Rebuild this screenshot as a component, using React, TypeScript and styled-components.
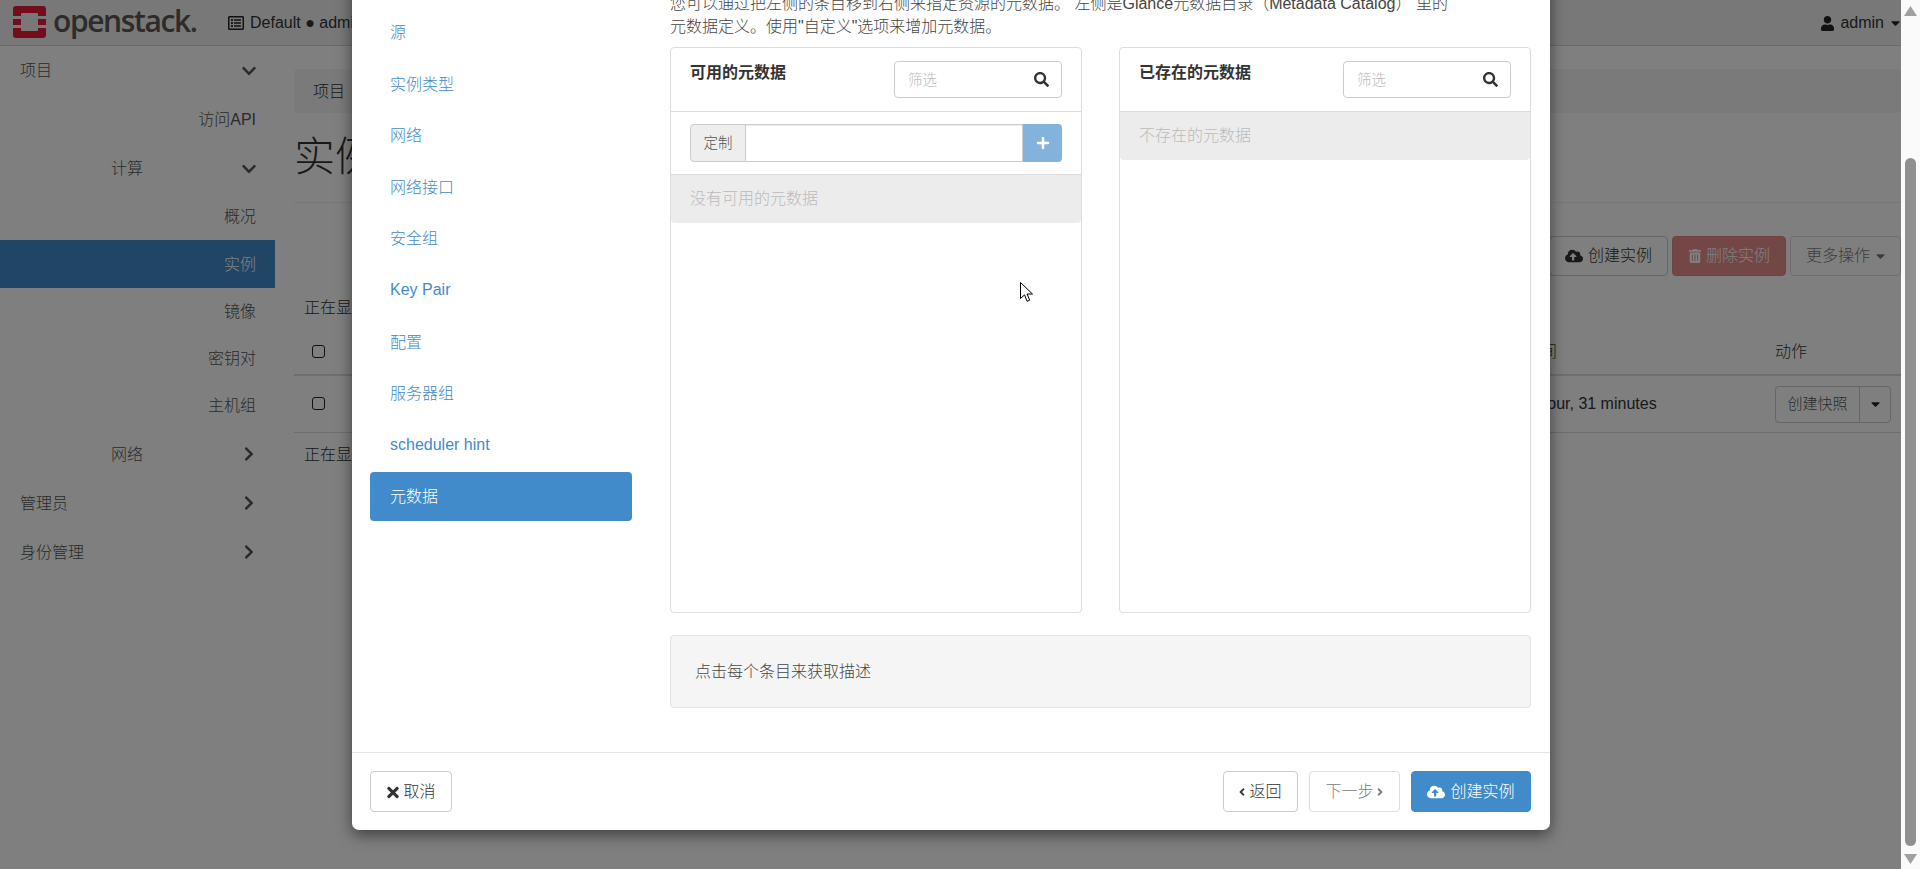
import React from "react";
import styled, { createGlobalStyle } from "styled-components";
import {
  FaCaretDown,
  FaChevronDown,
  FaChevronRight,
  FaCloudUploadAlt,
  FaAngleLeft,
  FaAngleRight,
  FaPlus,
  FaRegListAlt,
  FaSearch,
  FaTimes,
  FaTrashAlt,
  FaUser,
} from "react-icons/fa";

const Global = createGlobalStyle`
  html, body { margin: 0; padding: 0; height: 100%; overflow: hidden; background: #fff; }
  body { font-family: "Liberation Sans", "Noto Sans CJK SC", sans-serif; font-size: 16px; font-weight: 300; line-height: 1.43; color: #333; }
  * { box-sizing: border-box; }
`;

const Shell = styled.div`
  position: relative;
  display: flex;
  width: 100%;
  height: 100vh;
  overflow: hidden;
`;
const Page = styled.div`
  flex: 1;
  min-width: 0;
  position: relative;
  display: flex;
  flex-direction: column;
`;
const TopBar = styled.header`
  flex: none;
  height: 46px;
  display: flex;
  align-items: center;
  background: #f0f0f0;
  border-bottom: 1px solid #d2d2d2;
  padding: 1px 1px 0 13px;
  color: #333;
`;
const LogoMark = styled.svg`
  flex: none;
  width: 33px;
  height: 32px;
  margin-top: -2px;
`;
const LogoText = styled.span`
  flex: none;
  width: 175px;
  margin-left: 7px;
  margin-top: -4px;
  font-family: "Open Sans", "Liberation Sans", sans-serif;
  font-size: 30px;
  font-weight: 600;
  line-height: 40px;
  letter-spacing: -1.4px;
  color: #5c5654;
`;
const EnvLabel = styled.span`
  display: flex;
  align-items: center;
  gap: 6px;
  white-space: nowrap;
  svg { font-size: 16px; color: #222; }
`;
const UserMenu = styled.span`
  margin-left: auto;
  display: flex;
  align-items: center;
  gap: 5px;
  svg { color: #222; }
`;
const NarrowCaret = styled(FaCaretDown)`
  flex: none;
  width: 9px;
  height: 14px;
`;
const MenuCaret = styled(NarrowCaret)`
  margin-left: 2px;
`;
const Columns = styled.div`
  flex: 1;
  display: flex;
  min-height: 0;
`;
const Sidebar = styled.nav`
  flex: none;
  width: 275px;
`;
const SideRow = styled.div<{ $h: number; $indent?: number; $active?: boolean; $leaf?: boolean }>`
  height: ${(p) => p.$h}px;
  display: flex;
  align-items: center;
  justify-content: ${(p) => (p.$leaf ? "flex-end" : "flex-start")};
  padding: 2px ${(p) => (p.$leaf ? 19 : 18)}px 0 ${(p) => p.$indent ?? 20}px;
  background: ${(p) => (p.$active ? "#428bca" : "transparent")};
  color: ${(p) => (p.$active ? "#fff" : "#555")};
  svg { margin: -2px 0 0 auto; font-size: 16px; color: #555; }
`;
const Main = styled.main`
  flex: 1;
  min-width: 0;
  padding: 23px 0 0 19px;
`;
const Crumb = styled.div`
  height: 44px;
  display: flex;
  align-items: center;
  padding: 2px 0 0 19px;
  background: #f5f5f5;
  border-radius: 4px;
`;
const Title = styled.h1`
  margin: 0;
  height: 90px;
  display: flex;
  align-items: center;
  font-size: 41px;
  font-weight: 300;
  border-bottom: 1px solid #eee;
`;
const Toolbar = styled.div`
  margin-top: 33px;
  display: flex;
  justify-content: flex-end;
  gap: 4px;
`;
const PageButton = styled.div<{ $kind?: "danger" | "muted" }>`
  height: 40px;
  padding: 1px 15px 0;
  display: flex;
  align-items: center;
  gap: ${(p) => (p.$kind === "danger" ? 4 : p.$kind === "muted" ? 6 : 5)}px;
  border-radius: 4px;
  border: 1px solid ${(p) => (p.$kind === "danger" ? "#d43f3a" : "#ccc")};
  background: ${(p) => (p.$kind === "danger" ? "#d9534f" : "#fff")};
  color: ${(p) => (p.$kind === "danger" ? "#fff" : "#333")};
  opacity: ${(p) => (p.$kind ? 0.65 : 1)};
  svg { flex: none; margin-top: -1px; }
`;
const Count = styled.div<{ $gap: number }>`
  margin-top: ${(p) => p.$gap}px;
  padding-left: 10px;
  height: 23px;
`;
const HeadRow = styled.div`
  height: 56px;
  padding-top: 10px;
  display: flex;
  align-items: center;
  border-bottom: 2px solid #ddd;
`;
const BodyRow = styled.div`
  height: 57px;
  display: flex;
  align-items: center;
  border-bottom: 1px solid #ddd;
`;
const CheckBox = styled.span`
  flex: none;
  width: 13px;
  height: 13px;
  margin: -2px 0 0 18px;
  border: 1.5px solid #222;
  border-radius: 3px;
`;
const TimeCell = styled.span`
  margin-left: auto;
  width: 250px;
  white-space: nowrap;
`;
const ActionCell = styled.span`
  width: 126px;
  flex: none;
`;
const SplitGroup = styled.div`
  width: 116px;
  height: 37px;
  display: flex;
  border: 1px solid #ccc;
  border-radius: 4px;
  font-size: 15px;
  color: #555;
`;
const SplitMain = styled.span`
  flex: 1;
  display: flex;
  align-items: center;
  justify-content: center;
  border-right: 1px solid #ccc;
`;
const SplitCaret = styled.span`
  width: 30px;
  display: flex;
  align-items: center;
  justify-content: center;
  color: #222;
`;
const Backdrop = styled.div`
  position: absolute;
  inset: 0;
  background: rgba(0, 0, 0, 0.5);
`;
const Modal = styled.section`
  position: absolute;
  left: 352px;
  top: -40px;
  width: 1198px;
  height: 870px;
  display: flex;
  flex-direction: column;
  background: #fff;
  border-radius: 7px;
  box-shadow: 0 5px 15px rgba(0, 0, 0, 0.5);
`;
const ModalBody = styled.div`
  flex: 1;
  min-height: 0;
  display: flex;
  padding: 0 19px 0 18px;
  gap: 38px;
`;
const StepNav = styled.nav`
  flex: none;
  width: 262px;
  padding-top: 48px;
  display: flex;
  flex-direction: column;
  gap: 2.6px;
`;
const StepItem = styled.div<{ $active?: boolean; $latin?: boolean }>`
  height: 49px;
  padding: ${(p) => (p.$latin ? 0 : 2)}px 20px 0;
  display: flex;
  align-items: center;
  border-radius: 4px;
  color: ${(p) => (p.$active ? "#fff" : "#428bca")};
  background: ${(p) => (p.$active ? "#428bca" : "transparent")};
`;
const StepContent = styled.div`
  flex: 1;
  min-width: 0;
  padding-top: 32px;
`;
const Intro = styled.p`
  margin: 0 0 9px;
  line-height: 23px;
  white-space: pre;
  color: #444;
`;
const PanelGrid = styled.div`
  display: grid;
  grid-template-columns: 412px 412px;
  justify-content: space-between;
`;
const Panel = styled.div`
  height: 566px;
  border: 1px solid #ddd;
  border-radius: 4px;
  display: flex;
  flex-direction: column;
`;
const PanelHead = styled.div`
  flex: none;
  height: 64px;
  padding: 0 19px;
  display: flex;
  justify-content: space-between;
  align-items: flex-start;
  border-bottom: 1px solid #ddd;
`;
const PanelTitle = styled.strong`
  margin-top: 14px;
  font-weight: 700;
  color: #333;
`;
const Filter = styled.label`
  margin-top: 13px;
  width: 168px;
  height: 37px;
  padding: 0 12px 0 13px;
  display: flex;
  align-items: center;
  border: 1px solid #ccc;
  border-radius: 4px;
  svg { flex: none; font-size: 15px; color: #333; }
`;
const FilterInput = styled.input`
  flex: 1;
  min-width: 0;
  border: 0;
  padding: 0;
  outline: 0;
  font: 300 14.5px "Liberation Sans", "Noto Sans CJK SC", sans-serif;
  &::placeholder { color: #bbb; opacity: 1; }
`;
const CustomRow = styled.div`
  flex: none;
  height: 63px;
  padding: 12px 19px;
  display: flex;
  border-bottom: 1px solid #ddd;
`;
const AddonLabel = styled.span`
  flex: none;
  width: 56px;
  height: 38px;
  display: flex;
  align-items: center;
  justify-content: center;
  font-size: 14.5px;
  color: #555;
  background: #eee;
  border: 1px solid #ccc;
  border-radius: 4px 0 0 4px;
`;
const AddonInput = styled.input`
  flex: 1;
  min-width: 0;
  height: 38px;
  border: 1px solid #ccc;
  border-left: 0;
  outline: 0;
  box-shadow: inset 0 1px 1px rgba(0, 0, 0, 0.08);
`;
const AddButton = styled.span`
  flex: none;
  width: 39px;
  height: 38px;
  display: flex;
  align-items: center;
  justify-content: center;
  background: #428bca;
  opacity: 0.65;
  color: #fff;
  font-size: 14px;
  border-radius: 0 4px 4px 0;
`;
const EmptyRow = styled.div`
  flex: none;
  height: 48px;
  padding: 1px 0 0 19px;
  display: flex;
  align-items: center;
  color: #bbb;
  background: #ececec;
  border-radius: 0 0 4px 4px;
`;
const Well = styled.div`
  margin-top: 22px;
  height: 73px;
  padding: 2px 0 0 24px;
  display: flex;
  align-items: center;
  background: #f5f5f5;
  border: 1px solid #e3e3e3;
  border-radius: 4px;
  color: #444;
`;
const ModalFooter = styled.footer`
  flex: none;
  height: 78px;
  padding: 18px 19px 18px 18px;
  display: flex;
  justify-content: space-between;
  border-top: 1px solid #e5e5e5;
`;
const FooterGroup = styled.div`
  display: flex;
  gap: 11px;
`;
const FooterButton = styled.div<{ $kind?: "primary" | "disabled" }>`
  height: 41px;
  padding: 1px 15.5px 0;
  display: flex;
  align-items: center;
  gap: ${(p) => (p.$kind === "primary" ? 5 : 4)}px;
  border-radius: 4px;
  border: 1px solid ${(p) => (p.$kind === "primary" ? "#428bca" : "#ccc")};
  background: ${(p) => (p.$kind === "primary" ? "#428bca" : "#fff")};
  color: ${(p) => (p.$kind === "primary" ? "#fff" : "#333")};
  opacity: ${(p) => (p.$kind === "disabled" ? 0.65 : 1)};
`;
const CancelIcon = styled(FaTimes)`
  flex: none;
  width: 12px;
  height: 17px;
  margin-right: 1px;
`;
const BackIcon = styled(FaAngleLeft)`
  flex: none;
  width: 6px;
  height: 14px;
`;
const NextIcon = styled(FaAngleRight)`
  flex: none;
  width: 6px;
  height: 14px;
`;
const Track = styled.aside`
  flex: none;
  width: 19px;
  background: #fafafa;
  display: flex;
  flex-direction: column;
  padding-top: 6px;
`;
const TrackArrow = styled.svg`
  display: block;
  flex: none;
  width: 13px;
  height: 10px;
  margin-left: 3px;
  fill: #a0a0a0;
`;
const Thumb = styled.div`
  flex: none;
  width: 11px;
  height: 688px;
  margin: 142px 0 8px 4px;
  border-radius: 6px;
  background: #8f8f8f;
`;
const Cursor = styled.svg`
  position: absolute;
  left: 1020px;
  top: 282px;
  width: 13px;
  height: 20px;
  pointer-events: none;
`;

const Logo = () => (
  <LogoMark viewBox="0 0 33 32">
    <path
      fill="#e81a36"
      d="M3 0h27a3 3 0 0 1 3 3v7h-8V8a1 1 0 0 0-1-1H9a1 1 0 0 0-1 1v2H0V3a3 3 0 0 1 3-3zM0 13h8v6H0zM25 13h8v6h-8zM0 22h8v2a1 1 0 0 0 1 1h15a1 1 0 0 0 1-1v-2h8v7a3 3 0 0 1-3 3H3a3 3 0 0 1-3-3z"
    />
  </LogoMark>
);

const steps: { label: string; latin?: boolean }[] = [
  { label: "源" },
  { label: "实例类型" },
  { label: "网络" },
  { label: "网络接口" },
  { label: "安全组" },
  { label: "Key Pair", latin: true },
  { label: "配置" },
  { label: "服务器组" },
  { label: "scheduler hint", latin: true },
];

export default function App() {
  return (
    <Shell>
      <Global />
      <Page>
        <TopBar>
          <Logo />
          <LogoText>openstack.</LogoText>
          <EnvLabel>
            <FaRegListAlt />
            Default ● admin
          </EnvLabel>
          <UserMenu>
            <FaUser size={15} />
            admin
            <MenuCaret />
          </UserMenu>
        </TopBar>
        <Columns>
          <Sidebar>
            <SideRow $h={49}>项目<FaChevronDown /></SideRow>
            <SideRow $h={49} $leaf>访问API</SideRow>
            <SideRow $h={49} $indent={111}>计算<FaChevronDown /></SideRow>
            <SideRow $h={47} $leaf>概况</SideRow>
            <SideRow $h={48} $leaf $active>实例</SideRow>
            <SideRow $h={47} $leaf>镜像</SideRow>
            <SideRow $h={47} $leaf>密钥对</SideRow>
            <SideRow $h={47} $leaf>主机组</SideRow>
            <SideRow $h={50} $indent={111}>网络<FaChevronRight /></SideRow>
            <SideRow $h={48}>管理员<FaChevronRight /></SideRow>
            <SideRow $h={50}>身份管理<FaChevronRight /></SideRow>
          </Sidebar>
          <Main>
            <Crumb>项目</Crumb>
            <Title>实例</Title>
            <Toolbar>
              <PageButton><FaCloudUploadAlt size={18} />创建实例</PageButton>
              <PageButton $kind="danger"><FaTrashAlt size={14} />删除实例</PageButton>
              <PageButton $kind="muted">更多操作<NarrowCaret /></PageButton>
            </Toolbar>
            <Count $gap={21}>正在显示 1 项</Count>
            <HeadRow>
              <CheckBox />
              <TimeCell>时间</TimeCell>
              <ActionCell>动作</ActionCell>
            </HeadRow>
            <BodyRow>
              <CheckBox />
              <TimeCell>1 hour, 31 minutes</TimeCell>
              <ActionCell>
                <SplitGroup>
                  <SplitMain>创建快照</SplitMain>
                  <SplitCaret><NarrowCaret /></SplitCaret>
                </SplitGroup>
              </ActionCell>
            </BodyRow>
            <Count $gap={11}>正在显示 1 项</Count>
          </Main>
        </Columns>
        <Backdrop />
        <Modal>
          <ModalBody>
            <StepNav>
              {steps.map((s) => (
                <StepItem key={s.label} $latin={s.latin}>{s.label}</StepItem>
              ))}
              <StepItem $active>元数据</StepItem>
            </StepNav>
            <StepContent>
              <Intro>
                您可以通过把左侧的条目移到右侧来指定资源的元数据。 左侧是Glance元数据目录（Metadata Catalog） 里的
                <br />
                元数据定义。使用"自定义"选项来增加元数据。
              </Intro>
              <PanelGrid>
                <Panel>
                  <PanelHead>
                    <PanelTitle>可用的元数据</PanelTitle>
                    <Filter>
                      <FilterInput placeholder="筛选" />
                      <FaSearch />
                    </Filter>
                  </PanelHead>
                  <CustomRow>
                    <AddonLabel>定制</AddonLabel>
                    <AddonInput />
                    <AddButton><FaPlus /></AddButton>
                  </CustomRow>
                  <EmptyRow>没有可用的元数据</EmptyRow>
                </Panel>
                <Panel>
                  <PanelHead>
                    <PanelTitle>已存在的元数据</PanelTitle>
                    <Filter>
                      <FilterInput placeholder="筛选" />
                      <FaSearch />
                    </Filter>
                  </PanelHead>
                  <EmptyRow>不存在的元数据</EmptyRow>
                </Panel>
              </PanelGrid>
              <Well>点击每个条目来获取描述</Well>
            </StepContent>
          </ModalBody>
          <ModalFooter>
            <FooterButton><CancelIcon />取消</FooterButton>
            <FooterGroup>
              <FooterButton><BackIcon />返回</FooterButton>
              <FooterButton $kind="disabled">下一步<NextIcon /></FooterButton>
              <FooterButton $kind="primary"><FaCloudUploadAlt size={18} />创建实例</FooterButton>
            </FooterGroup>
          </ModalFooter>
        </Modal>
      </Page>
      <Track>
        <TrackArrow viewBox="0 0 13 10"><path d="M6.5 0L13 10H0z" /></TrackArrow>
        <Thumb />
        <TrackArrow viewBox="0 0 13 10"><path d="M0 0h13L6.5 10z" /></TrackArrow>
      </Track>
      <Cursor viewBox="0 0 13 20">
        <path d="M0.5 0.5v16l4-3.6 2.6 6.4 2.6-1.1-2.6-6.2h5.4z" fill="#fff" stroke="#000" strokeWidth="1" />
      </Cursor>
    </Shell>
  );
}
